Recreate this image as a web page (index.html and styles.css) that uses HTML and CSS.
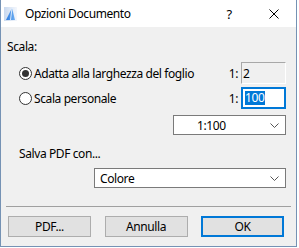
FILE: index.html
```
<!DOCTYPE html>
<html lang="it">
<head>
    <meta charset="UTF-8">
    <title>Opzioni Documento</title>
    <link rel="stylesheet" href="styles.css">
</head>
<body>
    <div class="window">
        <div class="titlebar">
            <svg class="app-icon" width="13" height="14" viewBox="0 0 13 14">
                <defs>
                    <linearGradient id="bg" x1="0" y1="0" x2="1" y2="0">
                        <stop offset="0" stop-color="#c9d9ef"/>
                        <stop offset="1" stop-color="#f4f7fc"/>
                    </linearGradient>
                    <linearGradient id="sail" x1="0" y1="0" x2="1" y2="0">
                        <stop offset="0" stop-color="#2c7be0"/>
                        <stop offset="1" stop-color="#6fb0f2"/>
                    </linearGradient>
                </defs>
                <rect width="13" height="14" fill="url(#bg)"/>
                <polygon points="2,13 8,1 11,13" fill="url(#sail)"/>
                <line x1="8" y1="1" x2="6.5" y2="13" stroke="#ffffff" stroke-width="0.8"/>
            </svg>
            <span class="title">Opzioni Documento</span>
            <span class="help">?</span>
            <span class="close">
                <svg width="10" height="10" viewBox="0 0 10 10">
                    <path d="M0.5 0.5 L9.5 9.5 M9.5 0.5 L0.5 9.5" stroke="#000" stroke-width="1" fill="none"/>
                </svg>
            </span>
        </div>

        <div class="content">
            <div class="section-label">Scala:</div>

            <div class="scale-row first">
                <div class="radio-option">
                    <span class="radio checked"></span>
                    <span>Adatta alla larghezza del foglio</span>
                </div>
                <span class="ratio">1:</span>
                <div class="field disabled">2</div>
            </div>

            <div class="scale-row">
                <div class="radio-option">
                    <span class="radio"></span>
                    <span>Scala personale</span>
                </div>
                <span class="ratio">1:</span>
                <div class="field focused"><span class="selected-text">100</span></div>
            </div>

            <div class="select-row">
                <div class="select scale-select">
                    <span>1:100</span>
                    <svg class="chevron" width="9" height="5" viewBox="0 0 9 5">
                        <polyline points="0.5,0.5 4.5,4.5 8.5,0.5" fill="none" stroke="#555" stroke-width="1"/>
                    </svg>
                </div>
            </div>

            <div class="section-label pdf-label">Salva PDF con...</div>

            <div class="select-row color-row">
                <div class="select color-select">
                    <span>Colore</span>
                    <svg class="chevron" width="9" height="5" viewBox="0 0 9 5">
                        <polyline points="0.5,0.5 4.5,4.5 8.5,0.5" fill="none" stroke="#555" stroke-width="1"/>
                    </svg>
                </div>
            </div>
        </div>

        <div class="separator"></div>

        <div class="buttons">
            <button class="btn">PDF...</button>
            <button class="btn">Annulla</button>
            <button class="btn default">OK</button>
        </div>
    </div>
</body>
</html>
```

FILE: styles.css
```
body {
    margin: 0;
    background-color: #ffffff;
    font-family: "Noto Sans", "Open Sans", sans-serif;
    font-size: 12px;
    letter-spacing: -0.4px;
    color: #000000;
}
.window {
    width: 295px;
    height: 246px;
    border: 1px solid #7592b4;
    border-top: 0;
    background-color: #f0f0f0;
}
.titlebar {
    height: 27px;
    background-color: #ffffff;
    display: flex;
    align-items: center;
}
.app-icon {
    margin-left: 3px;
}
.title {
    margin-left: 8px;
}
.help {
    margin-left: auto;
    width: 46px;
    text-align: center;
    font-size: 13px;
}
.close {
    width: 44px;
    display: flex;
    justify-content: center;
    align-items: center;
}
.content {
    padding: 12px 10px 0 6px;
}
.section-label {
    line-height: 16px;
}
.pdf-label {
    margin-top: 11px;
    margin-left: 12px;
}
.scale-row {
    display: flex;
    align-items: center;
    height: 22px;
    margin-left: 12px;
    margin-top: 3px;
}
.scale-row.first {
    margin-top: 7px;
}
.radio-option {
    flex: 1;
    display: flex;
    align-items: center;
}
.radio {
    width: 13px;
    height: 13px;
    box-sizing: border-box;
    border: 1px solid #333333;
    border-radius: 50%;
    background-color: #ffffff;
    margin-right: 2px;
    display: flex;
    justify-content: center;
    align-items: center;
}
.radio.checked::after {
    content: "";
    width: 7px;
    height: 7px;
    border-radius: 50%;
    background-color: #333333;
}
.ratio {
    margin-right: 3px;
}
.field {
    width: 45px;
    height: 22px;
    box-sizing: border-box;
    padding-left: 2px;
    display: flex;
    align-items: center;
}
.field.disabled {
    border: 1px solid #a8a8a8;
    border-right-color: #ffffff;
    border-bottom-color: #ffffff;
    padding-left: 1px;
}
.field.focused {
    border: 2px solid #0078d7;
    background-color: #ffffff;
}
.selected-text {
    background-color: #0078d7;
    color: #ffffff;
    line-height: 14px;
    padding-right: 1px;
}
.select-row {
    display: flex;
    justify-content: flex-end;
    margin-top: 6px;
}
.color-row {
    margin-top: 6px;
}
.select {
    height: 20px;
    box-sizing: border-box;
    border: 1px solid #7a7a7a;
    background-color: #ffffff;
    display: flex;
    align-items: center;
    justify-content: space-between;
    padding-right: 6px;
}
.scale-select {
    width: 113px;
    padding-left: 23px;
}
.color-select {
    width: 192px;
    padding-left: 5px;
}
.separator {
    height: 1px;
    background-color: #a0a0a0;
    margin: 18px 5px 0 5px;
}
.buttons {
    display: flex;
    justify-content: space-between;
    margin-top: 9px;
    padding: 0 12px 0 7px;
}
.btn {
    width: 83px;
    height: 21px;
    box-sizing: border-box;
    border: 1px solid #adadad;
    background-color: #e1e1e1;
    font-family: inherit;
    font-size: 12px;
    letter-spacing: -0.4px;
    color: #000000;
    padding: 0;
}
.btn.default {
    border: 2px solid #0078d7;
}
```
